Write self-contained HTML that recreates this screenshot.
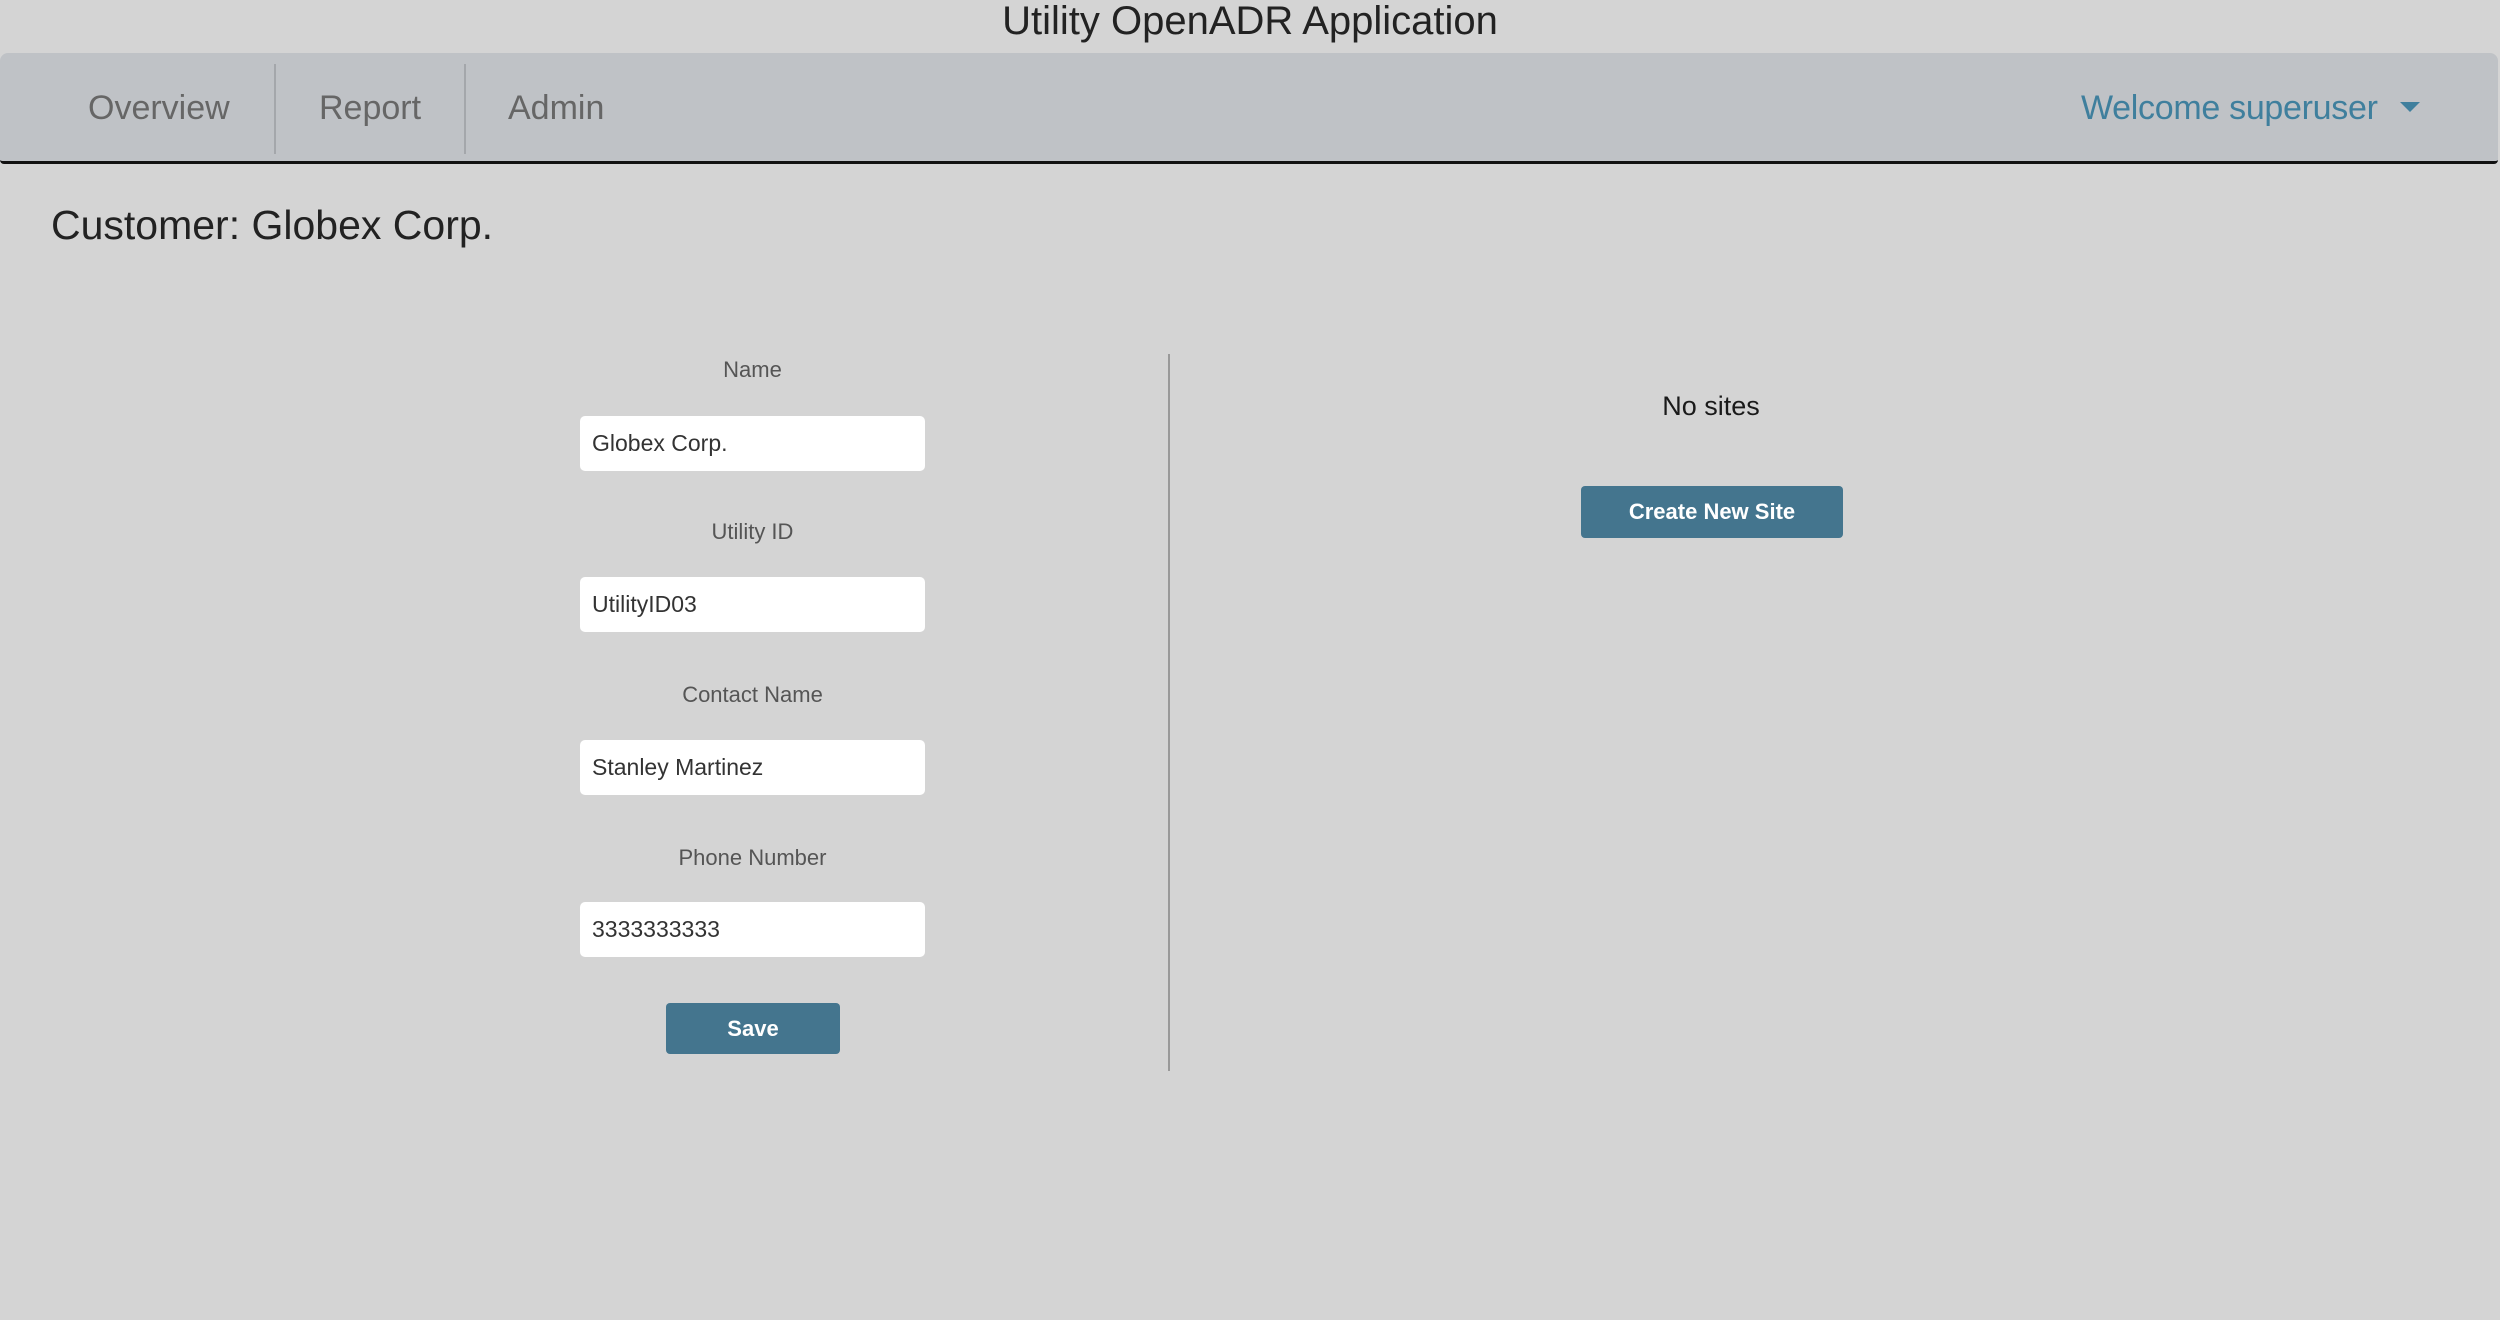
<!DOCTYPE html>
<html><head><meta charset="utf-8"><style>
body{margin:0;width:2500px;height:1320px;background:#d4d4d4;font-family:"Liberation Sans",sans-serif;position:relative;overflow:hidden;color:#222}
.a{position:absolute;white-space:nowrap}
.title{left:0;width:2500px;text-align:center;top:-1px;font-size:40px;color:#222}
.nav{position:absolute;left:0;top:53px;width:2498px;height:108px;background:#bfc2c6;border-bottom:3px solid #111;border-radius:8px 8px 4px 4px}
.ni{font-size:34px;color:#666;top:36px}
.div{position:absolute;top:11px;width:2px;height:90px;background:#a4a7ab}
.lbl{font-size:22px;color:#555;width:345px;left:580px;text-align:center}
.inp{position:absolute;left:580px;width:345px;height:55px;background:#fff;border-radius:5px;box-sizing:border-box;padding-left:12px;font-size:23px;line-height:55px;color:#333}
.btn{position:absolute;background:#44758e;color:#fff;border-radius:4px;font-size:22px;font-weight:bold;text-align:center}
</style></head><body>
<div class="a title">Utility OpenADR Application</div>
<div class="nav">
 <div class="a ni" style="left:88px">Overview</div>
 <div class="div" style="left:274px"></div>
 <div class="a ni" style="left:319px">Report</div>
 <div class="div" style="left:464px"></div>
 <div class="a ni" style="left:508px">Admin</div>
 <div class="a ni" style="left:2081px;color:#3f7f9d;letter-spacing:-0.3px">Welcome superuser</div>
 <div class="a" style="left:2400px;top:49px;width:0;height:0;border-left:10px solid transparent;border-right:10px solid transparent;border-top:10px solid #3f7f9d"></div>
</div>
<div class="a" style="left:51px;top:202px;font-size:41px;color:#222">Customer: Globex Corp.</div>
<div class="a lbl" style="top:357px">Name</div>
<div class="inp" style="top:416px">Globex Corp.</div>
<div class="a lbl" style="top:519px">Utility ID</div>
<div class="inp" style="top:577px">UtilityID03</div>
<div class="a lbl" style="top:682px">Contact Name</div>
<div class="inp" style="top:740px">Stanley Martinez</div>
<div class="a lbl" style="top:845px">Phone Number</div>
<div class="inp" style="top:902px">3333333333</div>
<div class="btn" style="left:666px;top:1003px;width:174px;height:51px;line-height:51px">Save</div>
<div style="position:absolute;left:1168px;top:354px;width:2px;height:717px;background:#999"></div>
<div class="a" style="left:1500px;width:422px;text-align:center;top:391px;font-size:27px;color:#1a1a1a">No sites</div>
<div class="btn" style="left:1581px;top:486px;width:262px;height:52px;line-height:52px">Create New Site</div>
</body></html>
